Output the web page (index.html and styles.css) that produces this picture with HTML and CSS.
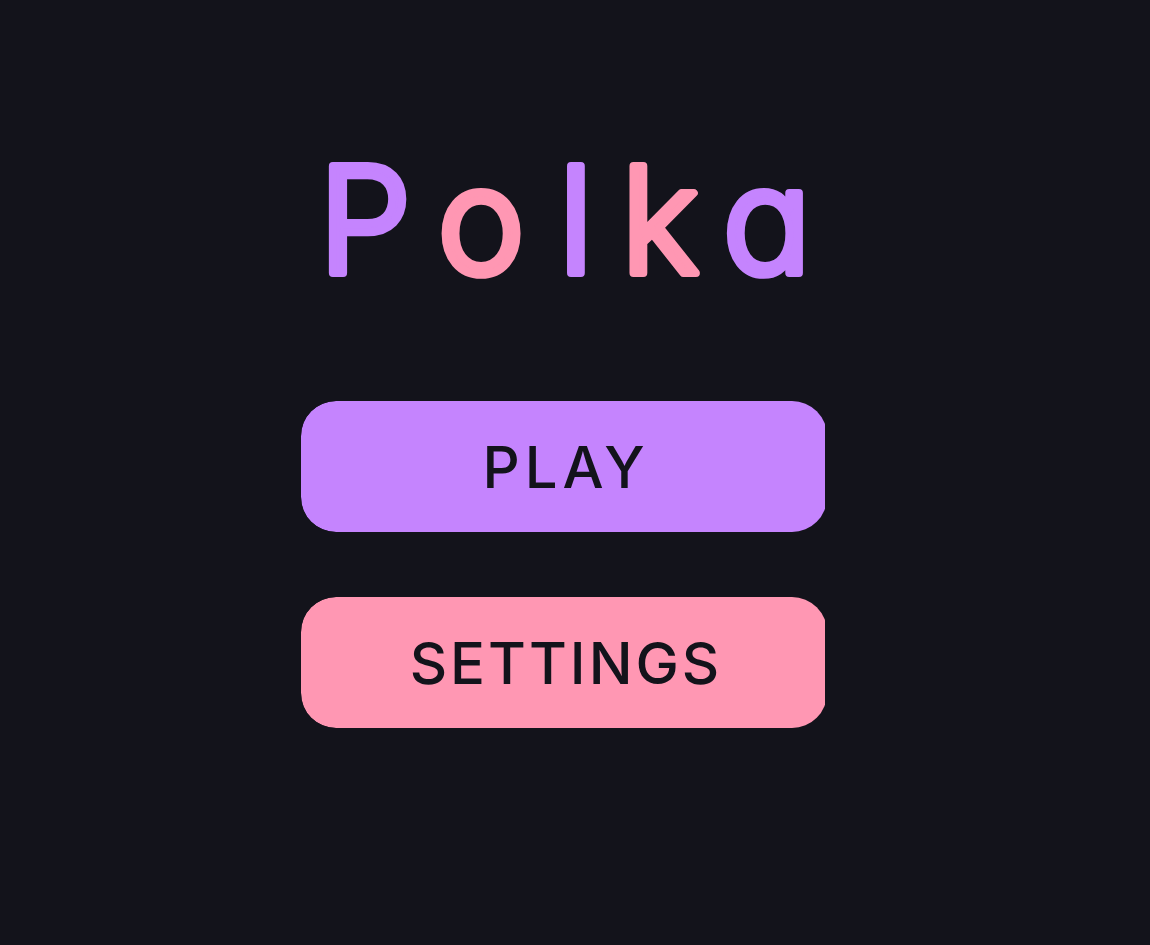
FILE: index.html
```html
<!DOCTYPE html>
<html lang="en">
<head>
    <meta charset="UTF-8">
    <title>Polka</title>
    <meta name="viewport" content="width=device-width, initial-scale=1.0">
    <link rel="stylesheet" href="styles.css">
</head>
<body>
    <main class="menu">
        <h1 class="title">
            <svg class="title-svg" width="1150" height="300" viewBox="0 0 1150 300">
                <text y="273" text-anchor="middle">
                    <tspan x="365" class="purple">P</tspan><tspan x="481" class="pink">o</tspan><tspan x="576" class="purple">l</tspan><tspan x="660" class="pink">k</tspan><tspan x="767" class="purple">a</tspan>
                </text>
            </svg>
        </h1>
        <div class="buttons">
            <div class="btn-wrap"><button class="btn btn-play">PLAY</button></div>
            <div class="btn-wrap"><button class="btn btn-settings">SETTINGS</button></div>
        </div>
    </main>
</body>
</html>
```

FILE: styles.css
```css
body {
    margin: 0;
    background-color: #13131b;
    font-family: Inter, "Noto Sans", sans-serif;
    min-height: 100vh;
}
.menu {
    display: flex;
    flex-direction: column;
    align-items: center;
}
.title {
    margin: 0;
    align-self: stretch;
    line-height: 0;
}
.title-svg {
    display: block;
    overflow: visible;
}
.title-svg text {
    font-family: Inter, "Noto Sans", sans-serif;
    font-size: 147px;
    font-weight: 300;
    font-feature-settings: "cv11" 1;
    stroke-width: 8px;
    stroke-linejoin: round;
}
.purple {
    fill: #c584fe;
    stroke: #c584fe;
}
.pink {
    fill: #ff97b3;
    stroke: #ff97b3;
}
.buttons {
    display: flex;
    flex-direction: column;
    gap: 65px;
    margin-top: 101px;
    margin-right: 24px;
}
.btn-wrap {
    width: 524px;
    border-radius: 35px 0 0 35px;
    overflow: hidden;
}
.btn {
    display: block;
    width: 526px;
    height: 131px;
    border: none;
    border-radius: 35px;
    font-family: Inter, "Noto Sans", sans-serif;
    font-size: 58px;
    font-weight: 500;
    letter-spacing: 5px;
    color: #13131b;
    padding: 0 0 0 4px;
    cursor: pointer;
}
.btn-play {
    background: #c584fe;
}
.btn-settings {
    background: #ff97b3;
    letter-spacing: 3px;
}
```
